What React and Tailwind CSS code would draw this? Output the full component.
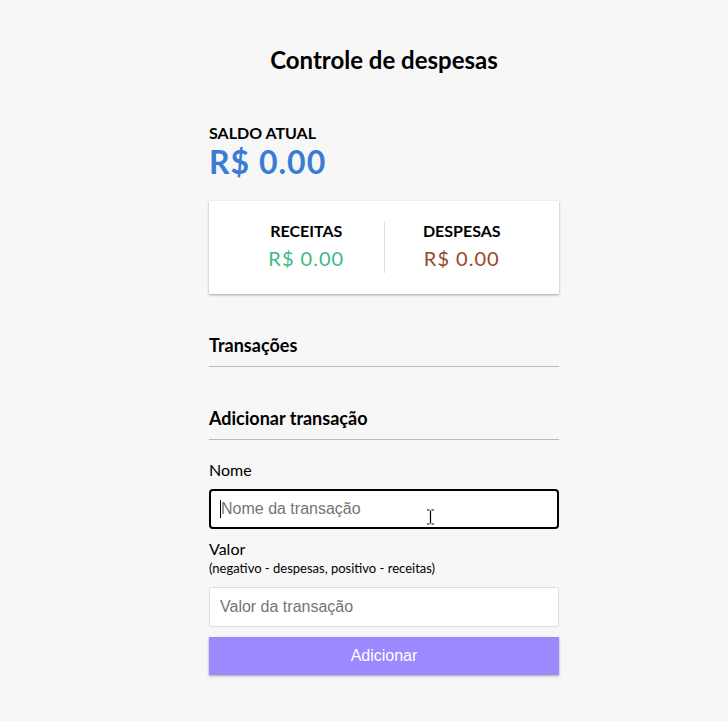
import React from "react";

const shadow = "shadow-[0_1px_3px_rgba(0,0,0,0.12),0_1px_2px_rgba(0,0,0,0.24)]";

function Section({ title }) {
    return (
        <h3 className="mt-10 border-b border-[#bbb] pb-[10px] text-[18px] leading-[22px] font-bold">
            {title}
        </h3>
    );
}

export default function App() {
    return (
        <div className="min-h-[721px] bg-[#f7f7f7] pl-10 font-['Lato',sans-serif] text-black">
            <div className="mx-auto w-[350px] pt-[45px] pb-10">
                <h2 className="text-center text-[24px] leading-[30px] font-bold">Controle de despesas</h2>

                <h4 className="mt-12 text-[16px] leading-5 font-bold uppercase">Saldo atual</h4>
                <h1 className="text-[32px] leading-[38px] font-bold tracking-[1px] text-[#3a7bd5]">R$ 0.00</h1>

                <div className={`mt-5 flex bg-white px-5 pt-5 pb-[21px] ${shadow}`}>
                    <div className="flex-1 border-r border-[#dedede] text-center">
                        <h4 className="text-[16px] leading-5 font-bold uppercase">Receitas</h4>
                        <p className="mt-[5px] mb-[3px] text-[20px] leading-6 tracking-[1px] text-[#42b983]">R$ 0.00</p>
                    </div>
                    <div className="flex-1 text-center">
                        <h4 className="text-[16px] leading-5 font-bold uppercase">Despesas</h4>
                        <p className="mt-[5px] mb-[3px] text-[20px] leading-6 tracking-[1px] text-[#96482a]">R$ 0.00</p>
                    </div>
                </div>

                <Section title="Transações" />
                <Section title="Adicionar transação" />

                <form onSubmit={(e) => e.preventDefault()}>
                    <label className="mt-5 block text-[16px] leading-5">Nome</label>
                    <div className="relative mt-[9px]">
                        <input
                            type="text"
                            placeholder="Nome da transação"
                            className="block h-10 w-full rounded-[4px] border-2 border-black bg-white px-[10px] font-['Liberation_Sans',sans-serif] text-[16px] outline-none placeholder:text-[#757575]"
                        />
                        <span className="absolute left-[11px] top-[11px] h-[18px] w-px bg-black" />
                        <svg className="absolute left-[217px] top-[20px]" width="9" height="16" viewBox="0 0 9 16">
                            <path d="M1 1h2.5M5.5 1H8M4.5 1.5v13M1 15h2.5M5.5 15H8" stroke="#000" strokeWidth="1.2" fill="none" />
                        </svg>
                    </div>

                    <label className="mt-[10px] block text-[16px] leading-5">Valor</label>
                    <p className="mt-[1px] text-[13px] leading-4">(negativo - despesas, positivo - receitas)</p>
                    <input
                        type="number"
                        placeholder="Valor da transação"
                        className="mt-[11px] block h-10 w-full rounded-[2px] border border-[#dedede] bg-white px-[10px] font-['Liberation_Sans',sans-serif] text-[16px] outline-none placeholder:text-[#757575]"
                    />

                    <button className={`mt-[10px] block h-[38px] w-full bg-[#9c88ff] font-['Liberation_Sans',sans-serif] text-[16px] text-white ${shadow}`}>
                        Adicionar
                    </button>
                </form>
            </div>
        </div>
    );
}
